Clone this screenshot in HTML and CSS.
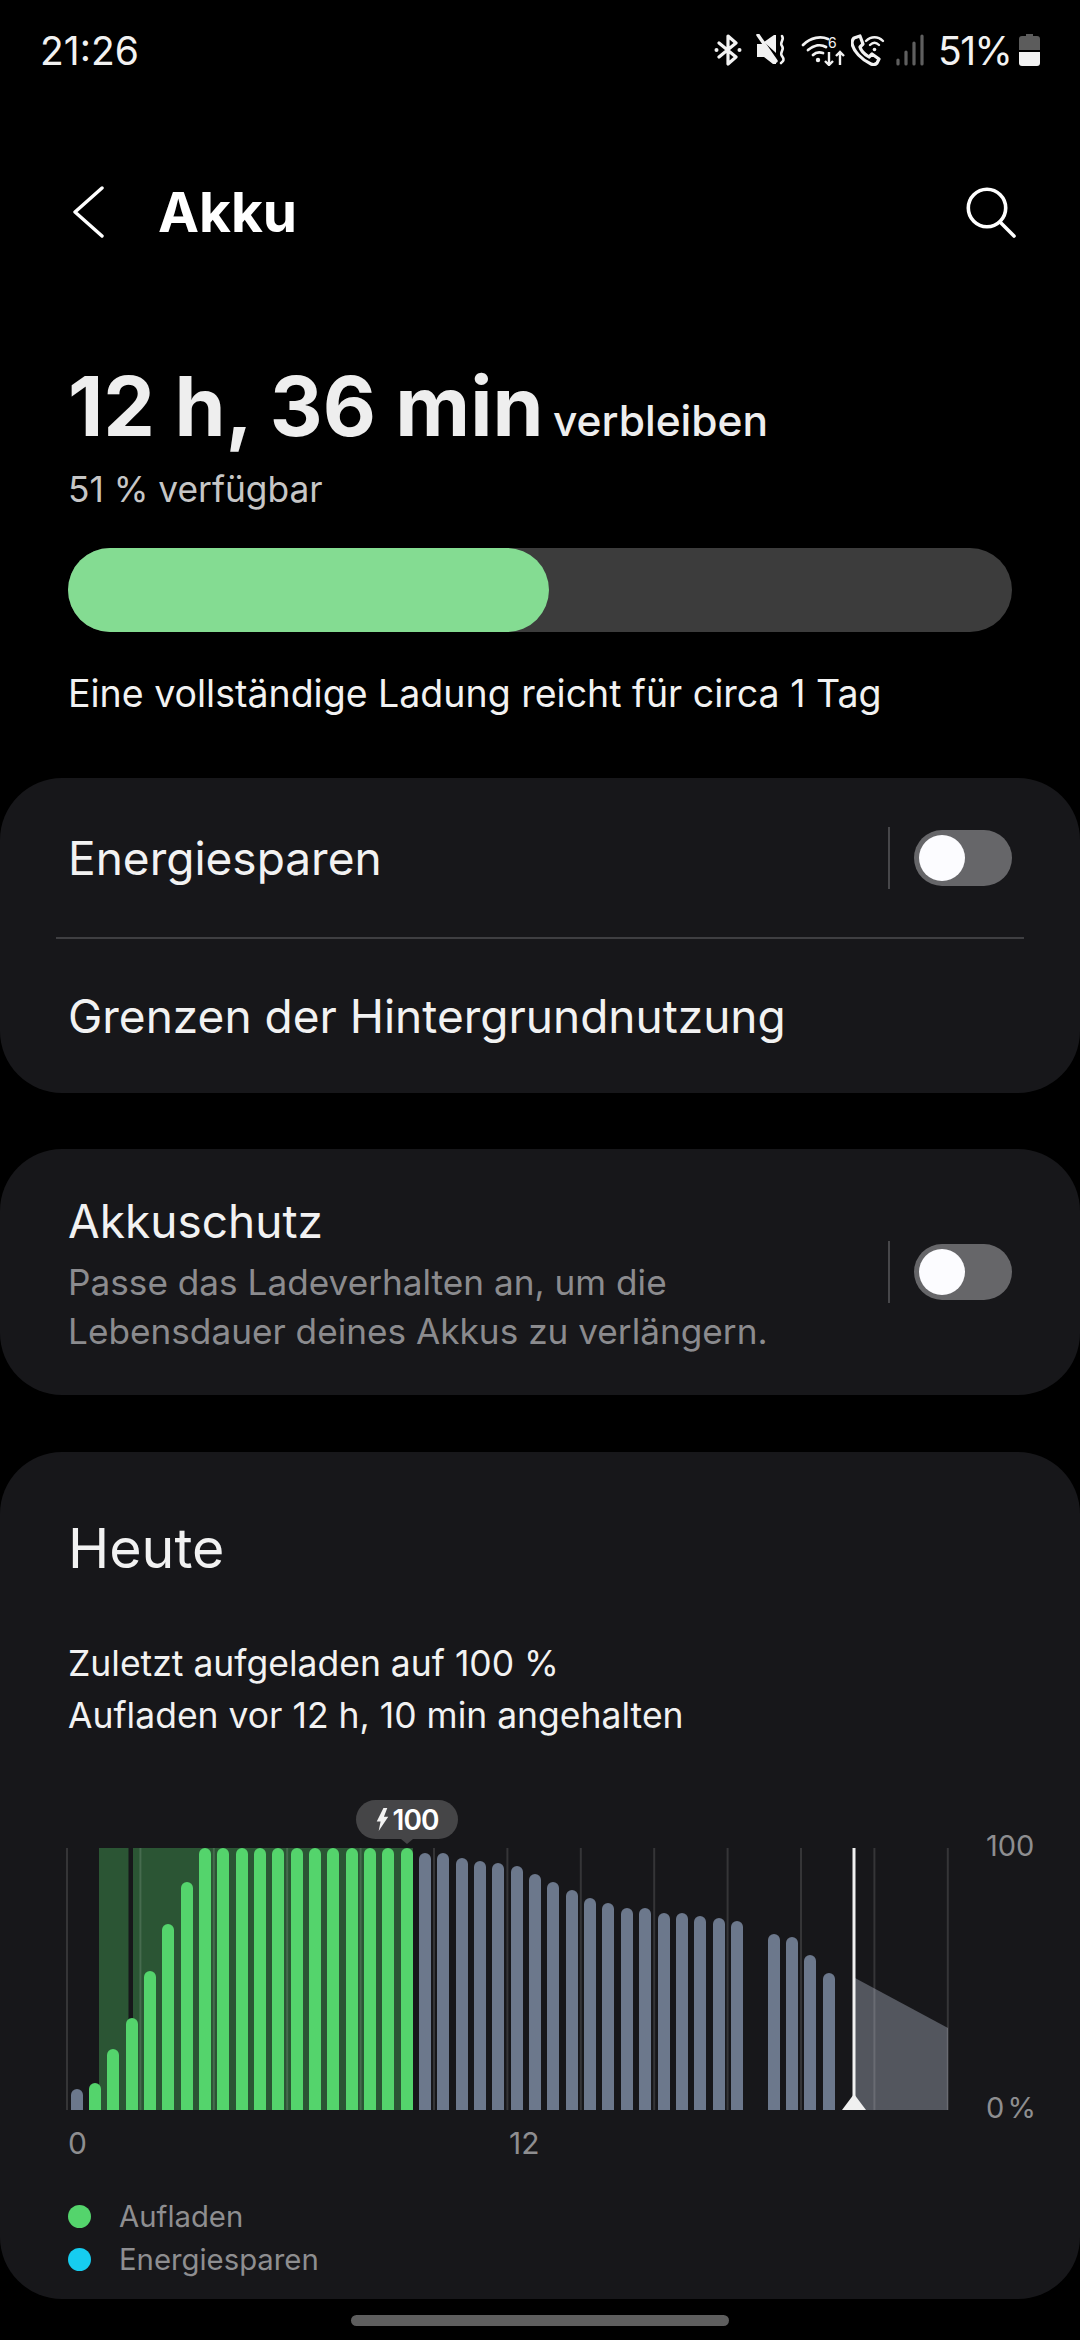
FILE: index.html
```html
<!DOCTYPE html>
<html lang="de">

<head>
    <meta charset="utf-8" />
    <meta name="viewport" content="width=device-width, initial-scale=1.0">
    <title>Akku</title>
    <link rel="stylesheet" href="styles.css">
</head>

<body>
    <div class="status_bar">
        <span class="clock">21:26</span>
        <div class="status_icons">
            <svg class="ic_bt" viewBox="0 0 28 32"><path d="M5 9l17 14-8 7V2l8 7L5 23" fill="none" stroke="#f2f2f2" stroke-width="3.200" stroke-linejoin="round" stroke-linecap="round"/><circle cx="2.500" cy="16" r="2" fill="#f2f2f2"/><circle cx="25.500" cy="16" r="2" fill="#f2f2f2"/></svg>
            <svg class="ic_mute" viewBox="0 0 30 32"><path d="M1 10h6l13 15v5h-3L8 23H1z" fill="#f2f2f2"/><path d="M8 8l10-7h2v18z" fill="#f2f2f2"/><path d="M2 1l18 26" stroke="#f2f2f2" stroke-width="3.400" stroke-linecap="round"/><path d="M26 2c3 4-3 6 0 10s-3 6 0 10 1 5-1 7" fill="none" stroke="#f2f2f2" stroke-width="2.600" stroke-linecap="round"/></svg>
            <svg class="ic_wifi" viewBox="0 0 45 32">
                <path d="M2 11c8-8 18-9 25-6M7 16c6-5 13-6 18-3M12 21c3-3 7-3 10-2" fill="none" stroke="#f2f2f2" stroke-width="2.800" stroke-linecap="round"/>
                <circle cx="17" cy="26" r="2.200" fill="#f2f2f2"/>
                <text x="27" y="14" class="wifi_six">6</text>
                <path d="M28 18v13M24 27l4 4 4-4M39 31V18M35 22l4-4 4 4" fill="none" stroke="#f2f2f2" stroke-width="2.400"/>
            </svg>
            <svg class="ic_call" viewBox="0 0 34 32"><path d="M3 4l6-2 3 8-3 3c1 4 4 7 9 10l3-3 7 5-2 4c-2 2-4 2-6 1C11 26 2 17 1 9c0-2 1-4 2-5z" fill="none" stroke="#f2f2f2" stroke-width="3.200" stroke-linejoin="round"/><path d="M15 7c5-5 12-5 17 0M19 11c3-3 6-3 9 0" fill="none" stroke="#f2f2f2" stroke-width="2.400" stroke-linecap="round"/><circle cx="23.500" cy="15.500" r="1.800" fill="#f2f2f2"/></svg>
            <svg class="ic_signal" viewBox="0 0 28 32"><path d="M2 26v4M10 18v12M18 9v21M26 2v28" stroke="#5f5f5f" stroke-width="3.200" stroke-linecap="round"/></svg>
            <span class="status_pct">51%</span>
            <svg class="ic_batt" viewBox="0 0 21 32"><path d="M7 0h7v2h4a3 3 0 0 1 3 3v11H0V5a3 3 0 0 1 3-3h4z" fill="#5c5c5c"/><path d="M0 18h21v11a3 3 0 0 1-3 3H3a3 3 0 0 1-3-3z" fill="#f2f2f2"/></svg>
        </div>
    </div>

    <header class="app_bar">
        <svg class="back_icon" viewBox="0 0 32 52"><path d="M30 2L3 26l27 24" fill="none" stroke="#fff" stroke-width="3.400" stroke-linecap="round" stroke-linejoin="round"/></svg>
        <h1 class="app_title">Akku</h1>
        <svg class="search_icon" viewBox="0 0 52 52"><circle cx="23" cy="22" r="18.700" fill="none" stroke="#fff" stroke-width="3.600"/><path d="M36 36l14 14" stroke="#fff" stroke-width="3.600" stroke-linecap="round"/></svg>
    </header>

    <section class="summary">
        <p class="remaining"><b>12 h, 36 min</b> <span>verbleiben</span></p>
        <p class="available">51 % verfügbar</p>
        <div class="level_track">
            <div class="level_fill"></div>
        </div>
        <p class="full_charge">Eine vollständige Ladung reicht für circa 1 Tag</p>
    </section>

    <section class="card card_power">
        <div class="row">
            <span class="row_label">Energiesparen</span>
            <i class="row_sep"></i>
            <i class="toggle"></i>
        </div>
        <hr class="card_line">
        <div class="row row_plain">
            <span class="row_label">Grenzen der Hintergrundnutzung</span>
        </div>
    </section>

    <section class="card card_protect">
        <div class="row">
            <div class="row_text">
                <span class="row_label">Akkuschutz</span>
                <p class="row_sub">Passe das Ladeverhalten an, um die<br>Lebensdauer deines Akkus zu verlängern.</p>
            </div>
            <i class="row_sep"></i>
            <i class="toggle"></i>
        </div>
    </section>

    <section class="card card_today">
        <h2 class="today_title">Heute</h2>
        <p class="today_info">Zuletzt aufgeladen auf 100 %<br>Aufladen vor 12 h, 10 min angehalten</p>

        <div class="chart">
            <div class="plot">
                <svg class="plot_bg" viewBox="0 0 884 262">
                    <rect x="33" y="0" width="29.500" height="262" fill="#2b5534"/>
                    <rect x="67" y="0" width="280" height="262" fill="#2b5534"/>
                    <path d="M789 130L882 180V262H789z" fill="#53565e"/>
                    <g stroke="#fff" stroke-opacity=".13" stroke-width="2">
                        <path d="M1 0V262M74.400 0V262M147.800 0V262M221.200 0V262M294.600 0V262M368 0V262M441.400 0V262M514.800 0V262M588.200 0V262M661.600 0V262M735 0V262M808.400 0V262M881.800 0V262"/>
                    </g>
                    <rect x="786.500" y="0" width="3" height="262" fill="#f0f0f0"/>
                    <path d="M788 246L800 262H776z" fill="#f0f0f0"/>
                </svg>
                <div class="bars">
                    <i class="bar" style="height:21px"></i>
                    <i class="bar on" style="height:27px"></i>
                    <i class="bar on" style="height:61px"></i>
                    <i class="bar on" style="height:92px"></i>
                    <i class="bar on" style="height:139px"></i>
                    <i class="bar on" style="height:186px"></i>
                    <i class="bar on" style="height:228px"></i>
                    <i class="bar on" style="height:262px"></i>
                    <i class="bar on" style="height:262px"></i>
                    <i class="bar on" style="height:262px"></i>
                    <i class="bar on" style="height:262px"></i>
                    <i class="bar on" style="height:262px"></i>
                    <i class="bar on" style="height:262px"></i>
                    <i class="bar on" style="height:262px"></i>
                    <i class="bar on" style="height:262px"></i>
                    <i class="bar on" style="height:262px"></i>
                    <i class="bar on" style="height:262px"></i>
                    <i class="bar on" style="height:262px"></i>
                    <i class="bar on" style="height:262px"></i>
                    <i class="bar" style="height:257px"></i>
                    <i class="bar" style="height:257px"></i>
                    <i class="bar" style="height:252px"></i>
                    <i class="bar" style="height:249px"></i>
                    <i class="bar" style="height:247px"></i>
                    <i class="bar" style="height:244px"></i>
                    <i class="bar" style="height:236px"></i>
                    <i class="bar" style="height:228px"></i>
                    <i class="bar" style="height:220px"></i>
                    <i class="bar" style="height:212px"></i>
                    <i class="bar" style="height:207px"></i>
                    <i class="bar" style="height:202px"></i>
                    <i class="bar" style="height:202px"></i>
                    <i class="bar" style="height:197px"></i>
                    <i class="bar" style="height:197px"></i>
                    <i class="bar" style="height:194px"></i>
                    <i class="bar" style="height:192px"></i>
                    <i class="bar" style="height:189px"></i>
                    <i class="bar" style="height:0"></i>
                    <i class="bar" style="height:176px"></i>
                    <i class="bar" style="height:173px"></i>
                    <i class="bar" style="height:155px"></i>
                    <i class="bar" style="height:137px"></i>
                </div>
                <div class="bubble">
                    <svg class="bolt" viewBox="0 0 12 24"><path d="M7 0L0 14h4L2 24l10-15H7.500L11 0z" fill="#f2f2f2"/></svg>100
                </div>
            </div>
            <div class="y_axis">
                <span>100</span>
                <span>0 %</span>
            </div>
        </div>

        <div class="x_axis">
            <span>0</span>
            <span>12</span>
        </div>

        <ul class="legend">
            <li><i class="dot dot_green"></i>Aufladen</li>
            <li><i class="dot dot_blue"></i>Energiesparen</li>
        </ul>
    </section>

    <div class="nav_bar">
        <i class="nav_pill"></i>
    </div>
</body>

</html>
```

FILE: styles.css
```css
* {
    box-sizing: border-box;
}

html,
body {
    padding: 0;
    margin: 0;
    width: 100%;
    height: 100%;
    background-color: #000;
}

body {
    display: flex;
    flex-direction: column;
    height: 2340px;
    overflow: hidden;
    font-family: Inter, Roboto, sans-serif;
    color: #f2f2f2;
}

p,
h1,
h2,
ul {
    margin: 0;
    padding: 0;
}

i {
    display: block;
}

.status_bar {
    height: 100px;
    flex: none;
    padding: 0 40px;
    display: flex;
    align-items: center;
    justify-content: space-between;
}

.clock {
    font-size: 39px;
}

.status_icons {
    display: flex;
    align-items: center;
}

.status_icons svg {
    height: 32px;
    display: block;
}

.ic_bt {
    width: 28px;
}

.ic_mute {
    width: 30px;
    margin-left: 14px;
}

.ic_wifi {
    width: 45px;
    margin-left: 15px;
}

.ic_call {
    width: 34px;
    margin-left: 5px;
}

.ic_signal {
    width: 28px;
    margin-left: 11px;
}

.wifi_six {
    font-size: 14px;
    fill: #f2f2f2;
}

.status_pct {
    width: 73px;
    font-size: 39px;
    margin-left: 14px;
    letter-spacing: -1.5px;
    white-space: nowrap;
}

.ic_batt {
    width: 21px;
    margin-left: 8px;
}

.app_bar {
    height: 112px;
    margin-top: 56px;
    padding: 0 64px 0 72px;
    flex: none;
    display: flex;
    align-items: center;
}

.back_icon {
    width: 32px;
    height: 52px;
}

.app_title {
    font-size: 55px;
    font-weight: 700;
    color: #fff;
    margin-left: 54px;
    flex: 1;
}

.search_icon {
    width: 52px;
    height: 52px;
}

.summary {
    padding: 0 68px;
    flex: none;
}

.remaining {
    margin-top: 89px;
    line-height: 100px;
    white-space: nowrap;
}

.remaining b {
    font-size: 82px;
    font-weight: 700;
    color: #eee;
    margin-right: 5px;
}

.remaining span {
    font-size: 42.500px;
    font-weight: 500;
    color: #eee;
}

.available {
    font-size: 35.300px;
    line-height: 46px;
    color: #c6c6c6;
    margin-top: -13px;
}

.level_track {
    height: 84px;
    margin-top: 34.500px;
    background-color: #3c3c3c;
    border-radius: 42px;
}

.level_fill {
    width: 481px;
    height: 100%;
    background-color: #84dc92;
    border-radius: 42px;
}

.full_charge {
    font-size: 37.500px;
    line-height: 48px;
    margin-top: 38.500px;
}

.card {
    background-color: #17171a;
    border-radius: 62px;
    flex: none;
}

.card_power {
    height: 315px;
    margin-top: 60px;
    padding-top: 0;
}

.row {
    display: flex;
    align-items: center;
    padding: 0 68px;
    height: 159px;
}

.row_plain {
    height: 154px;
}

.row_label {
    font-size: 46px;
    line-height: 54px;
    flex: 1;
}

.row_sep {
    width: 2px;
    height: 62px;
    background-color: #47474a;
    margin-right: 24px;
}

.toggle {
    width: 98px;
    height: 56px;
    padding: 5px;
    border-radius: 28px;
    background-color: #666669;
    position: relative;
}

.toggle::before {
    content: "";
    display: block;
    width: 46px;
    height: 46px;
    border-radius: 50%;
    background-color: #fcfcff;
}

.card_line {
    height: 2px;
    border: none;
    margin: 0 56px;
    background-color: #3f3f42;
}

.card_protect {
    height: 246px;
    margin-top: 56px;
}

.card_protect .row {
    height: 100%;
}

.row_text {
    flex: 1;
    padding-top: 6px;
}

.row_text .row_label {
    display: block;
}

.row_sub {
    font-size: 35.200px;
    line-height: 49px;
    color: #8b8b8e;
    margin-top: 10.500px;
}

.card_today {
    height: 847px;
    margin-top: 57px;
    padding: 66px 68px 0;
}

.today_title {
    font-size: 55.500px;
    font-weight: 400;
    line-height: 60px;
}

.today_info {
    font-size: 35.500px;
    line-height: 52px;
    margin-top: 60px;
}

.chart {
    display: flex;
    margin-top: 106px;
    margin-left: -2px;
}

.plot {
    width: 884px;
    height: 262px;
    position: relative;
    flex: none;
}

.plot_bg {
    position: absolute;
    left: 0;
    top: 0;
    width: 884px;
    height: 262px;
}

.bars {
    position: relative;
    height: 100%;
    padding-left: 4.500px;
    display: flex;
    align-items: flex-end;
    gap: 6.350px;
}

.bar {
    width: 12px;
    flex: none;
    background-color: #6c788c;
    border-radius: 6px 6px 0 0;
}

.bar.on {
    background-color: #54d46c;
}

.bubble {
    position: absolute;
    left: 290px;
    top: -48px;
    width: 102px;
    height: 39px;
    border-radius: 20px;
    background-color: #454547;
    color: #fff;
    font-size: 28px;
    font-weight: 600;
    letter-spacing: -1px;
    display: flex;
    align-items: center;
    justify-content: center;
}

.bubble::after {
    content: "";
    position: absolute;
    left: 45px;
    bottom: -5px;
    border-left: 6px solid transparent;
    border-right: 6px solid transparent;
    border-top: 5px solid #454547;
}

.bolt {
    width: 13px;
    height: 23px;
    margin-right: 4px;
}

.y_axis {
    width: 84px;
    height: 300px;
    margin-top: -21px;
    margin-left: 36px;
    display: flex;
    flex-direction: column;
    justify-content: space-between;
    font-size: 29px;
    line-height: 38px;
    color: #8e8e90;
    white-space: nowrap;
    word-spacing: -5px;
}

.x_axis {
    display: grid;
    grid-template-columns: 441px 1fr;
    margin-top: -3.500px;
    font-size: 30px;
    line-height: 38px;
    color: #8e8e90;
}

.legend {
    list-style: none;
    margin-top: 33px;
    font-size: 29.300px;
    line-height: 43px;
    color: #8e8e90;
}

.legend li {
    display: flex;
    align-items: center;
}

.dot {
    width: 23px;
    height: 23px;
    border-radius: 50%;
    margin-right: 28px;
}

.dot_green {
    background-color: #54d46c;
}

.dot_blue {
    background-color: #16cdf0;
}

.nav_bar {
    flex: 1;
    display: flex;
    justify-content: center;
    padding-top: 16px;
}

.nav_pill {
    width: 378px;
    height: 11px;
    border-radius: 6px;
    background-color: #5e5e5e;
}
```
